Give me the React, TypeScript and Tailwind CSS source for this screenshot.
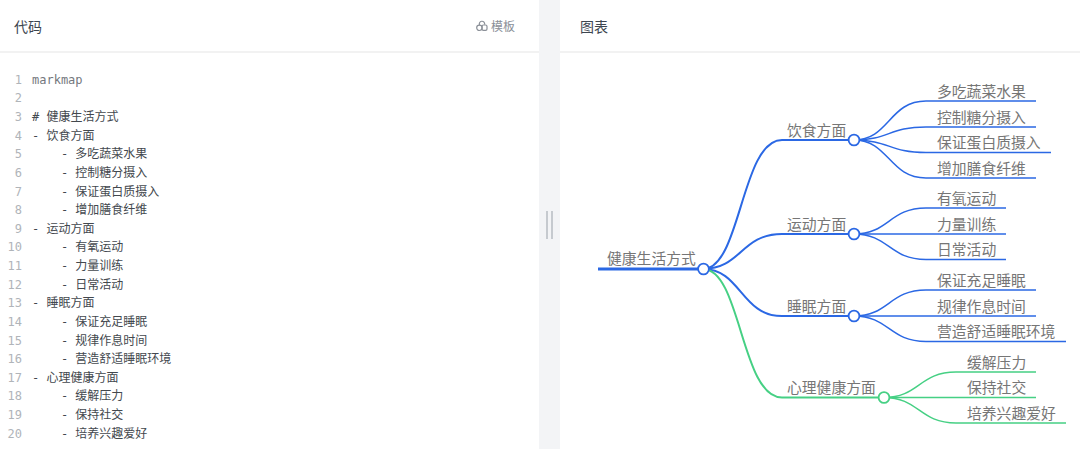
const codeLines = [
  'markmap',
  '',
  '# 健康生活方式',
  '- 饮食方面',
  '    - 多吃蔬菜水果',
  '    - 控制糖分摄入',
  '    - 保证蛋白质摄入',
  '    - 增加膳食纤维',
  '- 运动方面',
  '    - 有氧运动',
  '    - 力量训练',
  '    - 日常活动',
  '- 睡眠方面',
  '    - 保证充足睡眠',
  '    - 规律作息时间',
  '    - 营造舒适睡眠环境',
  '- 心理健康方面',
  '    - 缓解压力',
  '    - 保持社交',
  '    - 培养兴趣爱好',
];

const BLUE = '#2b68e4';
const GREEN = '#46d084';

const branches = [
  {
    label: '饮食方面', y: 140, textX: 787, cx: 854, color: BLUE,
    leaves: [
      { label: '多吃蔬菜水果', y: 101, end: 1036 },
      { label: '控制糖分摄入', y: 127, end: 1036 },
      { label: '保证蛋白质摄入', y: 152.5, end: 1051 },
      { label: '增加膳食纤维', y: 178, end: 1036 },
    ],
  },
  {
    label: '运动方面', y: 234, textX: 787, cx: 854, color: BLUE,
    leaves: [
      { label: '有氧运动', y: 208, end: 1006 },
      { label: '力量训练', y: 234, end: 1006 },
      { label: '日常活动', y: 259.5, end: 1006 },
    ],
  },
  {
    label: '睡眠方面', y: 316, textX: 787, cx: 854, color: BLUE,
    leaves: [
      { label: '保证充足睡眠', y: 290, end: 1036 },
      { label: '规律作息时间', y: 316, end: 1036 },
      { label: '营造舒适睡眠环境', y: 341.5, end: 1066 },
    ],
  },
  {
    label: '心理健康方面', y: 397.5, textX: 787, cx: 884, color: GREEN,
    leaves: [
      { label: '缓解压力', y: 372, end: 1036 },
      { label: '保持社交', y: 397.5, end: 1036 },
      { label: '培养兴趣爱好', y: 423, end: 1066 },
    ],
  },
];

const mapFont = { fontFamily: '"Noto Sans CJK SC", sans-serif' };

function MindMap() {
  return (
    <svg width="520" height="396" viewBox="560 53 520 396" className="block">
      <g fill="none">
        <path d="M598 269H703" stroke={BLUE} strokeWidth="3" />
        {branches.map((b) => (
          <g key={b.label} stroke={b.color}>
            <path
              d={`M703 269C741 269 741 ${b.y} 782 ${b.y}H${b.cx}`}
              strokeWidth="2"
            />
            {b.leaves.map((l) => (
              <path
                key={l.label}
                d={`M${b.cx} ${b.y}C${b.cx + 35} ${b.y} ${b.cx + 35} ${l.y} ${b.cx + 72} ${l.y}H${l.end}`}
                strokeWidth="1.5"
              />
            ))}
          </g>
        ))}
      </g>
      <circle cx="703.5" cy="269" r="5.4" fill="#fff" stroke={BLUE} strokeWidth="1.8" />
      {branches.map((b) => (
        <circle key={b.label} cx={b.cx} cy={b.y} r="5.4" fill="#fff" stroke={b.color} strokeWidth="1.8" />
      ))}
      <g fill="#767676" fontSize="14.8" style={mapFont}>
        <text x="607" y="264">健康生活方式</text>
        {branches.map((b) => (
          <text key={b.label} x={b.textX} y={b.y - 4.5}>{b.label}</text>
        ))}
        {branches.map((b) =>
          b.leaves.map((l) => (
            <text key={l.label} x={b.cx + 83} y={l.y - 4.5}>{l.label}</text>
          ))
        )}
      </g>
    </svg>
  );
}

function TemplateIcon() {
  return (
    <svg width="12" height="12" viewBox="0 0 12 12" fill="none" stroke="#8b9098" strokeWidth="1.2">
      <path d="M3.6 5.2A2.7 2.7 0 1 1 8.6 4.6" />
      <circle cx="3.4" cy="7.8" r="2.7" />
      <rect x="6" y="5" width="5" height="5.4" rx="1.4" />
    </svg>
  );
}

export default function App() {
  return (
    <div className="flex h-[449px] w-[1080px] overflow-hidden bg-[#f3f4f6] font-['Noto_Sans_CJK_SC',sans-serif]">
      <section className="flex w-[539px] flex-col bg-white">
        <header className="flex h-[53px] items-center justify-between border-b-2 border-[#f2f2f2] pl-[14px] pr-[24px]">
          <h2 className="text-sm text-[#3d4650]">代码</h2>
          <button className="flex items-center gap-[3px] text-xs text-[#8b9098]">
            <TemplateIcon />
            模板
          </button>
        </header>
        <div className="pt-[17.5px] font-['DejaVu_Sans_Mono','Noto_Sans_CJK_SC',monospace] text-xs">
          {codeLines.map((line, i) => (
            <div key={i} className="flex h-[18.63px] items-center leading-none">
              <span className="w-[22px] shrink-0 text-right text-[#b0b4b9]">{i + 1}</span>
              <span className={`ml-[10px] whitespace-pre ${i === 0 ? 'text-[#74787e]' : 'text-[#43484e]'}`}>{line}</span>
            </div>
          ))}
        </div>
      </section>
      <div className="flex w-[21px] shrink-0 items-center justify-center">
        <div className="h-[28px] w-[7px] border-x-2 border-[#c6cacf]" />
      </div>
      <section className="flex flex-1 flex-col bg-white">
        <header className="flex h-[53px] items-center border-b-2 border-[#f2f2f2] pl-5">
          <h2 className="text-sm text-[#3d4650]">图表</h2>
        </header>
        <MindMap />
      </section>
    </div>
  );
}
